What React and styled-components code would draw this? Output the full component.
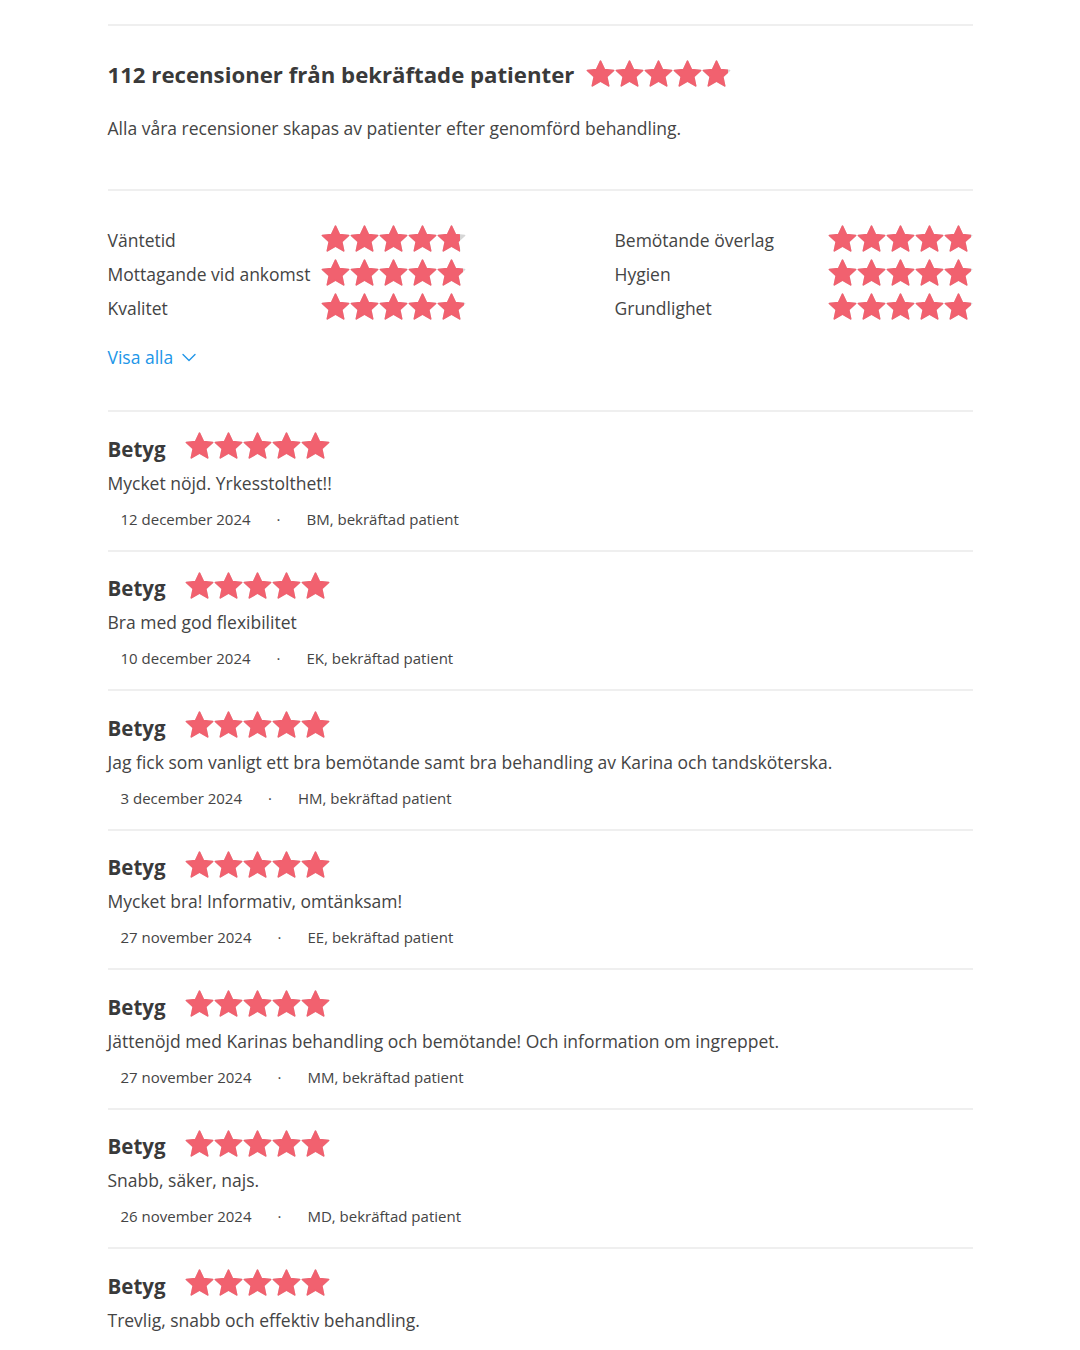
import React from 'react';
import styled, { createGlobalStyle } from 'styled-components';

const COLORS = {
  text: '#444444',
  heading: '#3a3a3a',
  star: '#f1616f',
  starEmpty: '#d6d6d6',
  divider: '#efefef',
  link: '#2196e8',
};

const CATEGORIES_LEFT = [
  { id: 'wait', label: 'Väntetid', score: 4.8 },
  { id: 'arrival', label: 'Mottagande vid ankomst', score: 4.9 },
  { id: 'quality', label: 'Kvalitet', score: 4.95 },
];

const CATEGORIES_RIGHT = [
  { id: 'manner', label: 'Bemötande överlag', score: 4.95 },
  { id: 'hygiene', label: 'Hygien', score: 4.95 },
  { id: 'thorough', label: 'Grundlighet', score: 4.95 },
];

const REVIEWS = [
  {
    id: 1,
    text: 'Mycket nöjd. Yrkesstolthet!!',
    date: '12 december 2024',
    author: 'BM, bekräftad patient',
  },
  {
    id: 2,
    text: 'Bra med god flexibilitet',
    date: '10 december 2024',
    author: 'EK, bekräftad patient',
  },
  {
    id: 3,
    text: 'Jag fick som vanligt ett bra bemötande samt bra behandling av Karina och tandsköterska.',
    date: '3 december 2024',
    author: 'HM, bekräftad patient',
  },
  {
    id: 4,
    text: 'Mycket bra! Informativ, omtänksam!',
    date: '27 november 2024',
    author: 'EE, bekräftad patient',
  },
  {
    id: 5,
    text: 'Jättenöjd med Karinas behandling och bemötande! Och information om ingreppet.',
    date: '27 november 2024',
    author: 'MM, bekräftad patient',
  },
  {
    id: 6,
    text: 'Snabb, säker, najs.',
    date: '26 november 2024',
    author: 'MD, bekräftad patient',
  },
  {
    id: 7,
    text: 'Trevlig, snabb och effektiv behandling.',
    date: '',
    author: '',
  },
];

// fat five-point star, fills nearly its whole box so stars sit edge to edge
const STAR_PATH =
  'M15 1.2L19.1 9.9L28.6 10.9L21.5 17.3L23.5 26.8L15 21.9L6.5 26.8L8.5 17.3L1.4 10.9L10.9 9.9Z';

const StarRow = ({ color, size }) => (
  <StarStrip>
    {[0, 1, 2, 3, 4].map(i => (
      <svg key={i} width={size} height={size - 1} viewBox="0 0 30 29">
        <path
          d={STAR_PATH}
          fill={color}
          stroke={color}
          strokeWidth="1.6"
          strokeLinejoin="round"
        />
      </svg>
    ))}
  </StarStrip>
);

const Stars = ({ score = 5, size = 29 }) => (
  <StarsWrapper>
    <StarRow color={COLORS.starEmpty} size={size} />
    <StarsFill style={{ width: `${(score / 5) * 100}%` }}>
      <StarRow color={COLORS.star} size={size} />
    </StarsFill>
  </StarsWrapper>
);

const RatingColumn = ({ items }) => (
  <Column>
    {items.map(({ id, label, score }) => (
      <RatingRow key={id}>
        <RatingLabel>{label}</RatingLabel>
        <Stars score={score} />
      </RatingRow>
    ))}
  </Column>
);

const Review = ({ text, date, author }) => (
  <ReviewItem>
    <ReviewHeader>
      <ReviewTitle>Betyg</ReviewTitle>
      <Stars score={5} />
    </ReviewHeader>
    <ReviewText>{text}</ReviewText>
    {date && (
      <Meta>
        <span>{date}</span>
        <Dot>·</Dot>
        <span>{author}</span>
      </Meta>
    )}
  </ReviewItem>
);

const App = () => (
  <>
    <GlobalStyle />
    <Page>
      <Divider />
      <Intro>
        <TitleRow>
          <Title>112 recensioner från bekräftade patienter</Title>
          <Stars score={4.9} />
        </TitleRow>
        <Subtitle>
          Alla våra recensioner skapas av patienter efter genomförd behandling.
        </Subtitle>
      </Intro>
      <Divider />
      <Ratings>
        <RatingGrid>
          <RatingColumn items={CATEGORIES_LEFT} />
          <RatingColumn items={CATEGORIES_RIGHT} />
        </RatingGrid>
        <ShowAll>
          Visa alla
          <svg width="16" height="16" viewBox="0 0 16 16">
            <path
              d="M2 5.5L8 11.5l6-6"
              fill="none"
              stroke={COLORS.link}
              strokeWidth="1.4"
              strokeLinecap="round"
              strokeLinejoin="round"
            />
          </svg>
        </ShowAll>
      </Ratings>
      {REVIEWS.map(review => (
        <React.Fragment key={review.id}>
          <Divider />
          <Review {...review} />
        </React.Fragment>
      ))}
    </Page>
  </>
);

const GlobalStyle = createGlobalStyle`
  body {
    margin: 0;
    background: #fff;
    font-family: 'Open Sans', 'Noto Sans', sans-serif;
    color: ${COLORS.text};
  }
`;

const Page = styled.div`
  width: 865px;
  margin: 0 auto;
  padding-top: 24px;
`;

const Divider = styled.div`
  height: 2px;
  background: ${COLORS.divider};
`;

const Intro = styled.section`
  padding: 34px 0 48px;
`;

const TitleRow = styled.div`
  display: flex;
  align-items: center;
  gap: 12px;
  height: 30px;

  ${() => StarsWrapper} {
    margin-top: -3px;
  }
`;

const Title = styled.h2`
  margin: 0;
  font-size: 22.2px;
  font-weight: 700;
  line-height: 30px;
  color: ${COLORS.heading};
`;

const Subtitle = styled.p`
  margin: 25px 0 0;
  font-size: 17.5px;
  line-height: 26px;
`;

const StarsWrapper = styled.div`
  position: relative;
  display: inline-flex;
  flex-shrink: 0;
`;

const StarsFill = styled.div`
  position: absolute;
  top: 0;
  left: 0;
  height: 100%;
  overflow: hidden;
`;

const StarStrip = styled.div`
  display: flex;
  svg {
    display: block;
    flex-shrink: 0;
  }
`;

const Ratings = styled.section`
  padding: 31px 0 40px;
`;

const RatingGrid = styled.div`
  display: flex;
  justify-content: space-between;
`;

const Column = styled.div`
  display: flex;
  flex-direction: column;
`;

const RatingRow = styled.div`
  display: flex;
  align-items: center;
  height: 34px;
`;

const RatingLabel = styled.span`
  width: 213px;
  font-size: 17.5px;
  line-height: 26px;
  padding-top: 2px;
  white-space: nowrap;
`;

const ShowAll = styled.button`
  display: inline-flex;
  align-items: center;
  gap: 8px;
  margin-top: 20px;
  padding: 0;
  border: 0;
  background: none;
  font-family: inherit;
  font-size: 17.5px;
  line-height: 26px;
  color: ${COLORS.link};
  cursor: pointer;
`;

const ReviewItem = styled.article`
  padding: 21.5px 0 20px;
`;

const ReviewHeader = styled.div`
  display: flex;
  align-items: center;
  gap: 19px;
  height: 30px;

  ${StarsWrapper} {
    margin-top: -5px;
  }
`;

const ReviewTitle = styled.h3`
  margin: 0;
  font-size: 20.5px;
  font-weight: 700;
  line-height: 30px;
  color: ${COLORS.heading};
`;

const ReviewText = styled.p`
  margin: 6px 0 0;
  font-size: 17.5px;
  line-height: 26px;
`;

const Meta = styled.div`
  display: flex;
  align-items: center;
  margin-top: 12px;
  padding-left: 13px;
  font-size: 15px;
  line-height: 22px;
`;

const Dot = styled.span`
  margin: 0 26px;
`;

export default App;
